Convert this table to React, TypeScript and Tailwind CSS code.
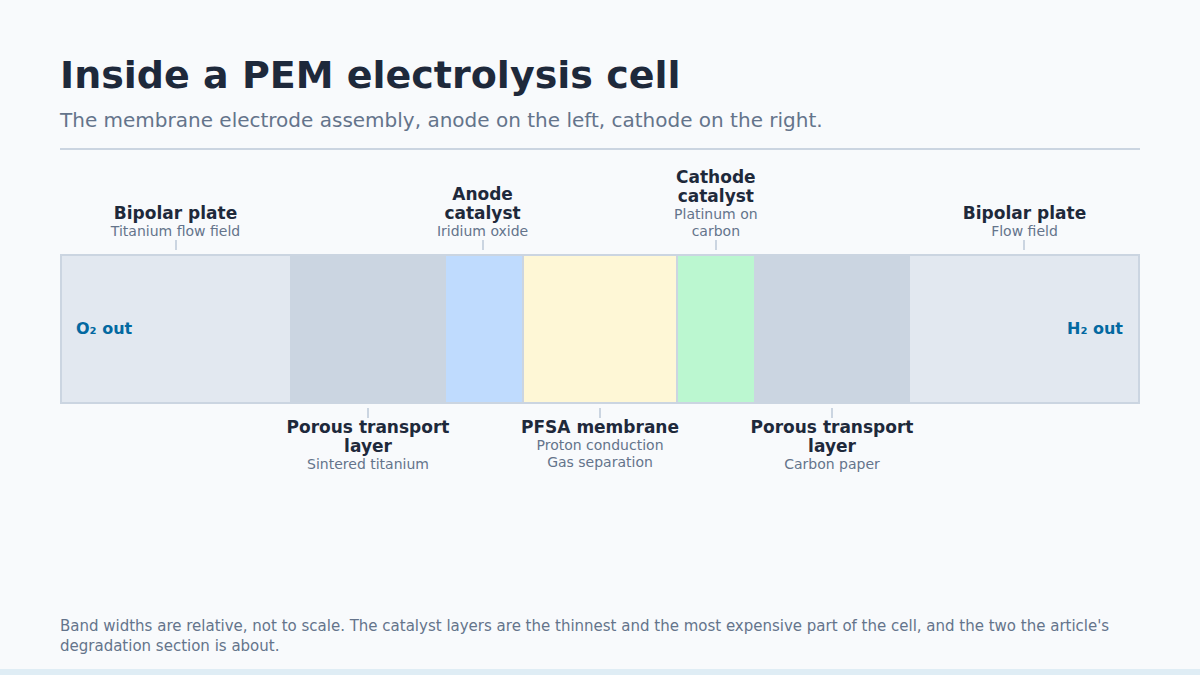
import React from "react";

interface Band {
  id: string;
  grow: string;
  color: string;
  title?: string;
  sub?: string[];
  side?: "top" | "bottom";
  flow?: { text: string; align: "left" | "right" };
}

const bands: Band[] = [
  {
    id: "bp-anode",
    grow: "flex-[3]",
    color: "bg-[#e2e8f0]",
    title: "Bipolar plate",
    sub: ["Titanium flow field"],
    side: "top",
    flow: { text: "O₂ out", align: "left" },
  },
  {
    id: "ptl-anode",
    grow: "flex-[2]",
    color: "bg-[#cbd5e1]",
    title: "Porous transport layer",
    sub: ["Sintered titanium"],
    side: "bottom",
  },
  {
    id: "cat-anode",
    grow: "flex-[1]",
    color: "bg-[#bfdbfe]",
    title: "Anode catalyst",
    sub: ["Iridium oxide"],
    side: "top",
  },
  {
    id: "membrane",
    grow: "flex-[2]",
    color: "bg-[#fef7d6]",
    title: "PFSA membrane",
    sub: ["Proton conduction", "Gas separation"],
    side: "bottom",
  },
  {
    id: "cat-cathode",
    grow: "flex-[1]",
    color: "bg-[#bbf7d0]",
    title: "Cathode catalyst",
    sub: ["Platinum on carbon"],
    side: "top",
  },
  {
    id: "ptl-cathode",
    grow: "flex-[2]",
    color: "bg-[#cbd5e1]",
    title: "Porous transport layer",
    sub: ["Carbon paper"],
    side: "bottom",
  },
  {
    id: "bp-cathode",
    grow: "flex-[3]",
    color: "bg-[#e2e8f0]",
    title: "Bipolar plate",
    sub: ["Flow field"],
    side: "top",
    flow: { text: "H₂ out", align: "right" },
  },
];

function Label({ band }: { band: Band }) {
  return (
    <div className="w-[calc(100%+24px)] shrink-0 text-center">
      <p className="text-[17px] leading-[19px] font-bold text-[#1e293b]">{band.title}</p>
      {band.sub?.map((line) => (
        <p key={line} className="text-[14px] leading-[17px] text-[#64748b]">
          {line}
        </p>
      ))}
    </div>
  );
}

function Tick() {
  return <div className="w-[2px] h-[10px] bg-[#cbd5e1] shrink-0" />;
}

export default function App() {
  return (
    <div className="w-[1200px] h-[675px] flex flex-col bg-[#f8fafc] font-['DejaVu_Sans',sans-serif] overflow-hidden">
      <div className="px-[60px] pt-[52px]">
        <h1 className="text-[38px] leading-[46px] font-bold text-[#1e293b]">
          Inside a PEM electrolysis cell
        </h1>
        <p className="mt-[8px] text-[20px] leading-[28px] text-[#64748b]">
          The membrane electrode assembly, anode on the left, cathode on the right.
        </p>
        <div className="mt-[14px] h-[2px] bg-[#cbd5e1]" />

        {/* labels above the stack */}
        <div className="mt-[18px] flex items-end gap-[2px] px-[2px]">
          {bands.map((b) => (
            <div key={b.id} className={`${b.grow} flex flex-col items-center justify-end`}>
              {b.side === "top" && (
                <>
                  <Label band={b} />
                  <Tick />
                  <div className="h-[4px]" />
                </>
              )}
            </div>
          ))}
        </div>

        {/* the cell stack */}
        <div className="h-[150px] flex gap-[2px] bg-[#cbd5e1] border-2 border-[#cbd5e1]">
          {bands.map((b) => (
            <div
              key={b.id}
              className={`${b.grow} min-w-0 ${b.color} flex items-center ${
                b.flow?.align === "right" ? "justify-end" : "justify-start"
              }`}
            >
              {b.flow && (
                <span
                  className={`text-[16px] font-bold text-[#0369a1] ${
                    b.flow.align === "right" ? "mr-[15px]" : "ml-[14px]"
                  }`}
                >
                  {b.flow.text}
                </span>
              )}
            </div>
          ))}
        </div>

        {/* labels below the stack */}
        <div className="flex items-start gap-[2px] px-[2px]">
          {bands.map((b) => (
            <div key={b.id} className={`${b.grow} flex flex-col items-center`}>
              {b.side === "bottom" && (
                <>
                  <div className="h-[4px]" />
                  <Tick />
                  <Label band={b} />
                </>
              )}
            </div>
          ))}
        </div>
      </div>

      <p className="mt-auto mb-[13px] px-[60px] text-[15px] leading-[20px] text-[#64748b]">
        Band widths are relative, not to scale. The catalyst layers are the thinnest and the most
        expensive part of the cell, and the two the article's degradation section is about.
      </p>
      <div className="h-[6px] bg-[#dfedf5] shrink-0" />
    </div>
  );
}
